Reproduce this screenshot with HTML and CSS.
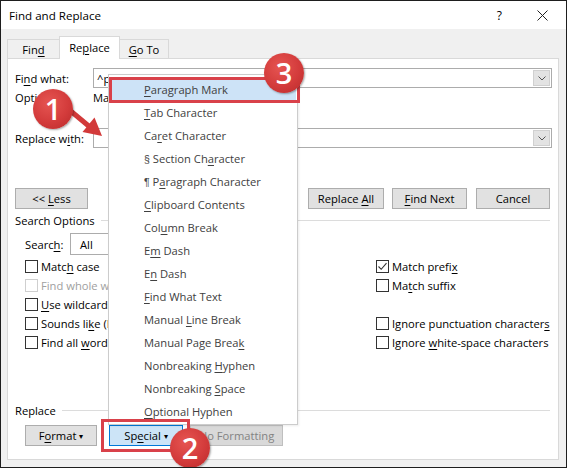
FILE: index.html
```html
<!DOCTYPE html>
<html lang="en">
<head>
    <meta charset="UTF-8">
    <title>Find and Replace</title>
    <link rel="stylesheet" href="styles.css">
</head>
<body>
<div class="window">
    <div class="titlebar">
        <span class="title">Find and Replace</span>
        <span class="help">?</span>
        <svg class="close" width="11" height="11" viewBox="0 0 11 11"><path d="M0.5 0.5L10.5 10.5M10.5 0.5L0.5 10.5" stroke="#222" stroke-width="1"/></svg>
    </div>

    <div class="tabs">
        <div class="tab tab-find"><span>Fin<u>d</u></span></div>
        <div class="tab tab-replace active"><span>Re<u>p</u>lace</span></div>
        <div class="tab tab-goto"><span><u>G</u>o To</span></div>
    </div>

    <div class="panel">
        <div class="field find-row">
            <label>Fi<u>n</u>d what:</label>
            <div class="combo">
                <span class="combo-value">^p</span>
                <span class="combo-btn"><svg width="8" height="5" viewBox="0 0 8 5"><path d="M0.5 0.5L4 4L7.5 0.5" fill="none" stroke="#555"/></svg></span>
            </div>
        </div>
        <div class="field options-row">
            <label>Options:</label>
            <span>Match Prefix</span>
        </div>
        <div class="field replace-row">
            <label>Replace w<u>i</u>th:</label>
            <div class="combo">
                <span class="combo-value"></span>
                <span class="combo-btn"><svg width="8" height="5" viewBox="0 0 8 5"><path d="M0.5 0.5L4 4L7.5 0.5" fill="none" stroke="#555"/></svg></span>
            </div>
        </div>

        <div class="actions">
            <button class="btn btn-less">&lt;&lt; <u>L</u>ess</button>
            <div class="spacer"></div>
            <button class="btn">Replace <u>A</u>ll</button>
            <button class="btn"><u>F</u>ind Next</button>
            <button class="btn">Cancel</button>
        </div>

        <div class="group-title search-title"><span>Search Options</span></div>

        <div class="search-row">
            <label>Searc<u>h</u>:</label>
            <div class="select">All</div>
        </div>

        <div class="checks">
            <div class="check"><span class="box"></span><span>Matc<u>h</u> case</span></div>
            <div class="check"><span class="box checked"><svg width="11" height="11" viewBox="0 0 11 11"><path d="M1.5 5.5L4.2 8.3L9.5 2.2" fill="none" stroke="#333" stroke-width="1.1"/></svg></span><span>Match prefi<u>x</u></span></div>
            <div class="check disabled"><span class="box"></span><span>Find whole words only</span></div>
            <div class="check"><span class="box"></span><span>Ma<u>t</u>ch suffix</span></div>
            <div class="check"><span class="box"></span><span><u>U</u>se wildcards</span></div>
            <div class="check"></div>
            <div class="check"><span class="box"></span><span>Sounds li<u>k</u>e (English)</span></div>
            <div class="check"><span class="box"></span><span>Ignore punctuation character<u>s</u></span></div>
            <div class="check"><span class="box"></span><span>Find all <u>w</u>ord forms (English)</span></div>
            <div class="check"><span class="box"></span><span>Ignore <u>w</u>hite-space characters</span></div>
        </div>

        <div class="group-title replace-title"><span>Replace</span></div>

        <div class="bottom-buttons">
            <button class="btn btn-format">F<u>o</u>rmat <span class="caret">&#9662;</span></button>
            <button class="btn btn-special">Sp<u>e</u>cial <span class="caret">&#9662;</span></button>
            <button class="btn btn-noformat">No Formatting</button>
        </div>
    </div>

    <!-- Special dropdown -->
    <div class="menu">
        <div class="menu-item selected"><u>P</u>aragraph Mark</div>
        <div class="menu-item"><u>T</u>ab Character</div>
        <div class="menu-item">Ca<u>r</u>et Character</div>
        <div class="menu-item"><span class="sym">§</span> Section Ch<u>a</u>racter</div>
        <div class="menu-item"><span class="sym">¶</span> P<u>a</u>ragraph Character</div>
        <div class="menu-item"><u>C</u>lipboard Contents</div>
        <div class="menu-item">Col<u>u</u>mn Break</div>
        <div class="menu-item">E<u>m</u> Dash</div>
        <div class="menu-item">E<u>n</u> Dash</div>
        <div class="menu-item"><u>F</u>ind What Text</div>
        <div class="menu-item">Manual <u>L</u>ine Break</div>
        <div class="menu-item">Manual Page Brea<u>k</u></div>
        <div class="menu-item">Nonbreaking <u>H</u>yphen</div>
        <div class="menu-item">Nonbreaking <u>S</u>pace</div>
        <div class="menu-item"><u>O</u>ptional Hyphen</div>
    </div>

    <!-- annotations -->
    <div class="mark mark-item"></div>
    <div class="mark mark-special"></div>
    <svg class="arrow" width="50" height="40" viewBox="60 100 50 40">
        <path d="M65.5 106.5L89.5 126.5" stroke="#d23a3a" stroke-width="5" stroke-linecap="round"/>
        <polygon points="101,135 81.5,131 93.5,116.5" fill="#d23a3a"/>
    </svg>
    <div class="badge badge-1">1</div>
    <div class="badge badge-2">2</div>
    <div class="badge badge-3">3</div>
</div>
</body>
</html>
```

FILE: styles.css
```css
body {
    margin: 0;
    background: #fff;
    font-family: "Open Sans", "Noto Sans", sans-serif;
    font-size: 11.2px;
    color: #000;
}
u {
    text-decoration-thickness: 1px;
    text-underline-offset: 2px;
}
.window {
    position: relative;
    width: 567px;
    height: 468px;
    box-sizing: border-box;
    border: 1px solid #1e1e1e;
    background: #f0f0f0;
    overflow: hidden;
}
.titlebar {
    height: 28px;
    background: #fff;
    display: flex;
    align-items: center;
    padding-left: 8px;
    position: relative;
}
.title {
    font-size: 11.6px;
    flex: 1;
}
.help {
    font-size: 12px;
    margin-right: 35px;
}
.close {
    margin-right: 18px;
}
.tabs {
    height: 29px;
    display: flex;
    align-items: flex-end;
    padding-left: 6px;
    position: relative;
    z-index: 2;
}
.tab {
    height: 19px;
    box-sizing: border-box;
    border: 1px solid #d9d9d9;
    border-bottom: none;
    display: flex;
    align-items: center;
    justify-content: center;
    background: #f0f0f0;
}
.tab-find { width: 53px; }
.tab-replace { width: 61px; margin-left: -1px; }
.tab-goto { width: 50px; margin-left: -1px; }
.tab.active {
    height: 23px;
    background: #fff;
    margin-bottom: -1px;
    padding-bottom: 2px;
}
.panel {
    margin-left: 6px;
    width: 552px;
    height: 402px;
    box-sizing: border-box;
    border: 1px solid #d9d9d9;
    background: #fff;
    padding-left: 7px;
}
.field {
    display: flex;
    align-items: center;
}
.field label {
    width: 78px;
}
.find-row {
    margin-top: 9px;
    height: 20px;
}
.options-row {
    margin-top: 1px;
    height: 16px;
}
.replace-row {
    margin-top: 23px;
    height: 20px;
}
.combo {
    width: 459px;
    height: 20px;
    box-sizing: border-box;
    border: 1px solid #acacac;
    display: flex;
    align-items: center;
    justify-content: space-between;
}
.combo-value {
    padding-left: 3px;
}
.combo-btn {
    width: 17px;
    height: 16px;
    margin-right: 1px;
    background: #e3e3e3;
    border: 1px solid #d0d0d0;
    box-sizing: border-box;
    display: flex;
    align-items: center;
    justify-content: center;
}
.actions {
    margin-top: 40px;
    display: flex;
    width: 535px;
}
.spacer { flex: 1; }
.btn {
    height: 21px;
    box-sizing: border-box;
    border: 1px solid #adadad;
    background: #e1e1e1;
    font-family: inherit;
    font-size: inherit;
    color: #000;
    padding: 0;
}
.btn-less { width: 73px; }
.actions .btn:nth-child(3) { width: 76px; }
.actions .btn:nth-child(4) { width: 75px; margin-left: 8px; }
.actions .btn:nth-child(5) { width: 74px; margin-left: 9px; }
.group-title {
    display: flex;
    align-items: center;
    height: 14px;
    width: 535px;
}
.group-title::after {
    content: "";
    flex: 1;
    height: 1px;
    background: #dcdcdc;
    margin-left: 6px;
}
.search-title { margin-top: 4px; }
.search-row {
    margin-top: 6px;
    padding-left: 10px;
    display: flex;
    align-items: center;
    height: 22px;
}
.search-row label { width: 45px; }
.select {
    width: 140px;
    height: 22px;
    box-sizing: border-box;
    border: 1px solid #acacac;
    padding-left: 9px;
    display: flex;
    align-items: center;
}
.checks {
    margin-top: 2px;
    padding-left: 10px;
    display: grid;
    grid-template-columns: 350px 1fr;
    grid-auto-rows: 19px;
}
.check {
    display: flex;
    align-items: center;
}
.box {
    width: 13px;
    height: 13px;
    box-sizing: border-box;
    border: 1px solid #333;
    margin-right: 3px;
    display: flex;
    align-items: center;
    justify-content: center;
    background: #fff;
    flex-shrink: 0;
}
.check:nth-child(even) .box { margin-left: 1px; }
.check.disabled { color: #a0a0a0; }
.check.disabled .box { border-color: #cfcfcf; }
.replace-title { margin-top: 51px; }
.bottom-buttons {
    margin-top: 8px;
    padding-left: 10px;
    display: flex;
}
.caret {
    font-size: 8px;
    vertical-align: 1px;
}
.btn-format { width: 72px; }
.btn-special {
    width: 74px;
    margin-left: 12px;
    background: #cce4f7;
    border-color: #0078d7;
}
.btn-noformat {
    width: 93px;
    margin-left: 7px;
    background: #d9d9d9;
    border-color: #bfbfbf;
    color: #838383;
}
.menu {
    position: absolute;
    left: 107px;
    top: 73px;
    width: 190px;
    height: 351px;
    box-sizing: border-box;
    border: 1px solid #cccccc;
    background: #fff;
    padding: 3px 1px;
    z-index: 5;
    box-shadow: 1px 1px 2px rgba(0, 0, 0, 0.08);
}
.menu-item {
    height: 23px;
    line-height: 23px;
    padding-left: 34px;
    color: #404040;
    white-space: nowrap;
}
.menu-item.selected {
    background: #cde3f7;
}
.sym {
    font-family: "Liberation Sans", "DejaVu Sans", sans-serif;
    font-size: 10.5px;
    color: #404040;
}
.mark {
    position: absolute;
    border: 3px solid #d9414a;
    z-index: 6;
}
.mark-item {
    left: 108px;
    top: 76px;
    width: 185px;
    height: 20px;
}
.mark-special {
    left: 100px;
    top: 418px;
    width: 83px;
    height: 27px;
}
.arrow {
    position: absolute;
    left: 60px;
    top: 100px;
    z-index: 7;
}
.badge {
    position: absolute;
    width: 40px;
    height: 40px;
    border-radius: 50%;
    background: radial-gradient(circle at 40% 35%, #e65552 0%, #d33b3b 55%, #b82a2a 100%);
    box-shadow: 1px 1px 2px rgba(0, 0, 0, 0.35);
    color: #fff;
    font-family: "Open Sans", sans-serif;
    font-weight: 600;
    font-size: 29px;
    line-height: 40px;
    text-align: center;
    z-index: 8;
}
.badge-1 { left: 32px; top: 88px; }
.badge-2 { left: 169px; top: 427px; }
.badge-3 { left: 263px; top: 52px; }
```
